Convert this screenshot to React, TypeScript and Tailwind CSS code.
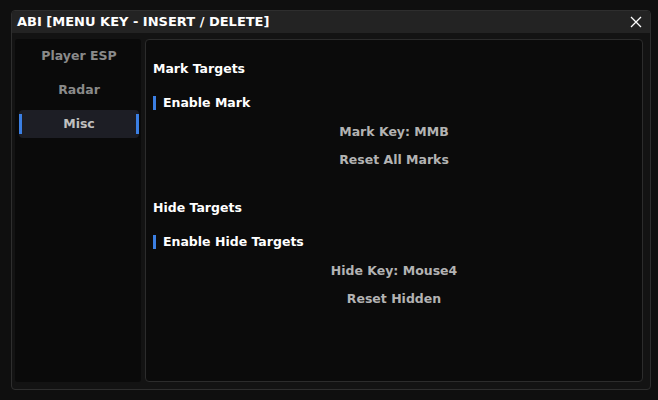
const tabs = ['Player ESP', 'Radar', 'Misc'];

const Toggle: React.FC<{ label: string }> = ({ label }) => (
  <div className="flex h-[14px] items-center gap-[7px] pl-[7px]">
    <span className="h-[14px] w-[3px] bg-[#3b7fe3]" />
    <span className="text-[12.5px] font-bold text-white">{label}</span>
  </div>
);

const Centered: React.FC<{ label: string }> = ({ label }) => (
  <div className="flex h-[28px] items-center justify-center text-[12.5px] font-bold text-[#b3b3b3]">
    {label}
  </div>
);

const Section: React.FC<{ title: string; toggle: string; keyLabel: string; reset: string }> = ({
  title,
  toggle,
  keyLabel,
  reset,
}) => (
  <div className="flex flex-col">
    <div className="flex h-[16px] items-center pl-[7px] text-[12.5px] font-bold text-white">{title}</div>
    <div className="mt-[19px]">
      <Toggle label={toggle} />
    </div>
    <div className="mt-[8px] flex flex-col">
      <Centered label={keyLabel} />
      <Centered label={reset} />
    </div>
  </div>
);

export default function App() {
  return (
    <div
      className="h-[400px] w-[658px] bg-[#0f0f0f] pt-[10px] pl-[11px]"
      style={{ fontFamily: '"DejaVu Sans", Verdana, sans-serif' }}
    >
      <div className="flex h-[380px] w-[640px] flex-col overflow-hidden rounded-[4px] border border-[#2e2e2e] bg-[#131313]">
        <div className="flex h-[22px] shrink-0 items-center justify-between bg-[#232323] pr-[8px] pl-[5px]">
          <span className="text-[13px] font-bold text-white">ABI [MENU KEY - INSERT / DELETE]</span>
          <svg width="12" height="12" viewBox="0 0 12 12" className="text-white">
            <path d="M1 1 L11 11 M11 1 L1 11" stroke="currentColor" strokeWidth="1.3" />
          </svg>
        </div>
        <div className="flex flex-1 gap-[4px] pt-[6px] pr-[7px] pb-[7px] pl-[3px]">
          <div className="flex w-[126px] flex-col gap-[6px] rounded-[3px] bg-[#0a0a0a] pt-[3px] pr-[2px] pl-[4px]">
            {tabs.map((t) => {
              const active = t === 'Misc';
              return (
                <div
                  key={t}
                  className={
                    active
                      ? 'flex h-[28px] items-center justify-between rounded-[4px] bg-[#1d1e25]'
                      : 'flex h-[28px] items-center justify-center'
                  }
                >
                  {active && <span className="h-[20px] w-[3px] bg-[#3b7fe3]" />}
                  <span
                    className={
                      active
                        ? 'text-[12.5px] font-bold text-[#c0c0c0]'
                        : 'text-[12.5px] font-bold text-[#8a8a8a]'
                    }
                  >
                    {t}
                  </span>
                  {active && <span className="h-[20px] w-[3px] bg-[#3b7fe3]" />}
                </div>
              );
            })}
          </div>
          <div className="flex flex-1 flex-col gap-[26px] rounded-[4px] border border-[#2c2c2c] bg-[#0b0b0b] pt-[21px]">
            <Section title="Mark Targets" toggle="Enable Mark" keyLabel="Mark Key: MMB" reset="Reset All Marks" />
            <Section
              title="Hide Targets"
              toggle="Enable Hide Targets"
              keyLabel="Hide Key: Mouse4"
              reset="Reset Hidden"
            />
          </div>
        </div>
      </div>
    </div>
  );
}
